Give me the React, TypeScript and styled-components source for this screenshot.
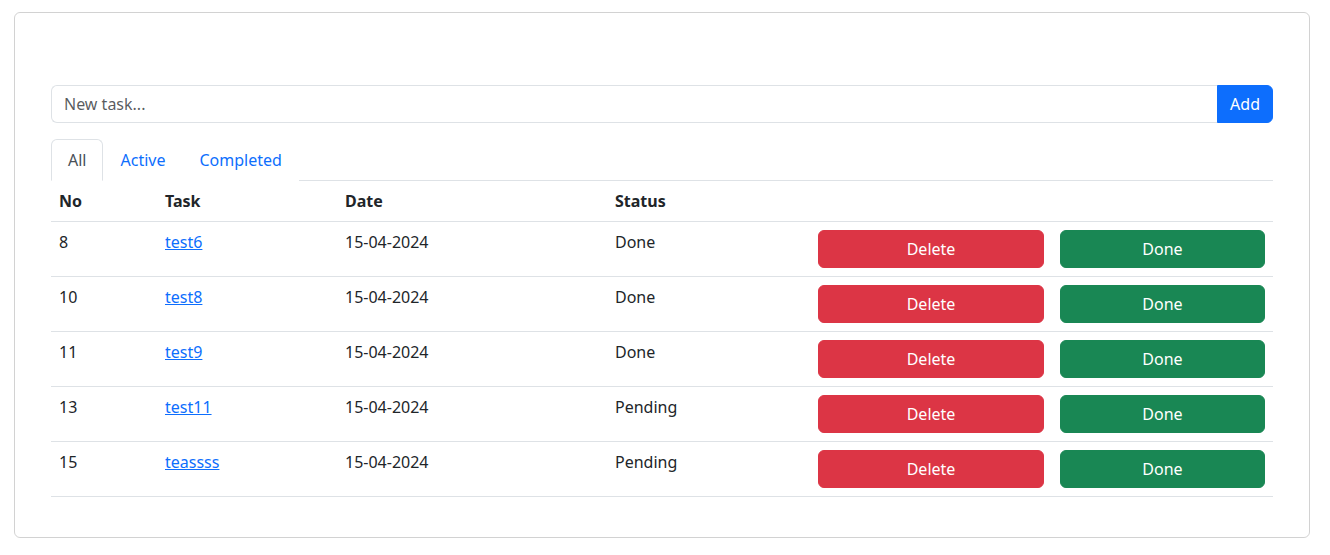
import React, { useState } from "react";
import styled, { createGlobalStyle } from "styled-components";

const GlobalStyle = createGlobalStyle`
  * { box-sizing: border-box; }
  body {
    margin: 0;
    background: #fff;
    font-family: "Segoe UI", "Noto Sans", "Open Sans", sans-serif;
    font-size: 16px;
    line-height: 1.5;
    color: #212529;
  }
`;

const Page = styled.div`
  padding: 12px 20px 18px 14px;
`;

const Card = styled.div`
  border: 1px solid rgba(0, 0, 0, 0.175);
  border-radius: 6px;
  padding: 72px 36px 40px;
`;

const InputGroup = styled.form`
  display: flex;
  margin-bottom: 16px;
`;

const TaskInput = styled.input`
  flex: 1;
  height: 38px;
  padding: 6px 12px;
  font: inherit;
  color: #212529;
  border: 1px solid #dee2e6;
  border-right: none;
  border-radius: 6px 0 0 6px;
  outline: none;

  &::placeholder {
    color: rgba(33, 37, 41, 0.75);
  }
`;

const AddButton = styled.button`
  height: 38px;
  padding: 6px 12px;
  font: inherit;
  color: #fff;
  background: #0d6efd;
  border: 1px solid #0d6efd;
  border-radius: 0 6px 6px 0;
  cursor: pointer;
`;

const Tabs = styled.div`
  display: flex;
  border-bottom: 1px solid #dee2e6;
`;

const Tab = styled.button<{ $active?: boolean }>`
  padding: 8px 16px;
  margin-bottom: -1px;
  font: inherit;
  line-height: 1.5;
  background: #fff;
  color: ${(p) => (p.$active ? "#495057" : "#0d6efd")};
  border: 1px solid ${(p) => (p.$active ? "#dee2e6" : "transparent")};
  border-bottom-color: ${(p) => (p.$active ? "#fff" : "transparent")};
  border-radius: 6px 6px 0 0;
  cursor: pointer;
`;

const Table = styled.table`
  width: 100%;
  table-layout: fixed;
  border-collapse: collapse;
`;

const Th = styled.th<{ $w?: number }>`
  width: ${(p) => (p.$w ? `${p.$w}px` : "auto")};
  padding: 8px;
  text-align: left;
  font-weight: 700;
  border-bottom: 1px solid #dee2e6;
`;

const Td = styled.td`
  padding: 8px;
  vertical-align: top;
  border-bottom: 1px solid #dee2e6;
`;

const TaskLink = styled.a`
  color: #0d6efd;
  text-decoration: underline;
`;

const ActionButton = styled.button<{ $variant: "danger" | "success" }>`
  display: block;
  width: 100%;
  height: 38px;
  padding: 6px 12px;
  font: inherit;
  color: #fff;
  background: ${(p) => (p.$variant === "danger" ? "#dc3545" : "#198754")};
  border: 1px solid ${(p) => (p.$variant === "danger" ? "#dc3545" : "#198754")};
  border-radius: 6px;
  cursor: pointer;
`;

type Task = { id: number; name: string; date: string; status: string };

const tasks: Task[] = [
  { id: 8, name: "test6", date: "15-04-2024", status: "Done" },
  { id: 10, name: "test8", date: "15-04-2024", status: "Done" },
  { id: 11, name: "test9", date: "15-04-2024", status: "Done" },
  { id: 13, name: "test11", date: "15-04-2024", status: "Pending" },
  { id: 15, name: "teassss", date: "15-04-2024", status: "Pending" },
];

const App: React.FC = () => {
  const [tab, setTab] = useState("All");

  return (
    <Page>
      <GlobalStyle />
      <Card>
        <InputGroup onSubmit={(e) => e.preventDefault()}>
          <TaskInput placeholder="New task..." />
          <AddButton type="submit">Add</AddButton>
        </InputGroup>

        <Tabs>
          {["All", "Active", "Completed"].map((t) => (
            <Tab key={t} $active={tab === t} onClick={() => setTab(t)}>
              {t}
            </Tab>
          ))}
        </Tabs>

        <Table>
          <thead>
            <tr>
              <Th $w={106}>No</Th>
              <Th $w={180}>Task</Th>
              <Th $w={270}>Date</Th>
              <Th $w={203}>Status</Th>
              <Th $w={242}></Th>
              <Th></Th>
            </tr>
          </thead>
          <tbody>
            {tasks.map((task) => (
              <tr key={task.id}>
                <Td>{task.id}</Td>
                <Td>
                  <TaskLink href="#">{task.name}</TaskLink>
                </Td>
                <Td>{task.date}</Td>
                <Td>{task.status}</Td>
                <Td>
                  <ActionButton $variant="danger">Delete</ActionButton>
                </Td>
                <Td>
                  <ActionButton $variant="success">Done</ActionButton>
                </Td>
              </tr>
            ))}
          </tbody>
        </Table>
      </Card>
    </Page>
  );
};

export default App;
